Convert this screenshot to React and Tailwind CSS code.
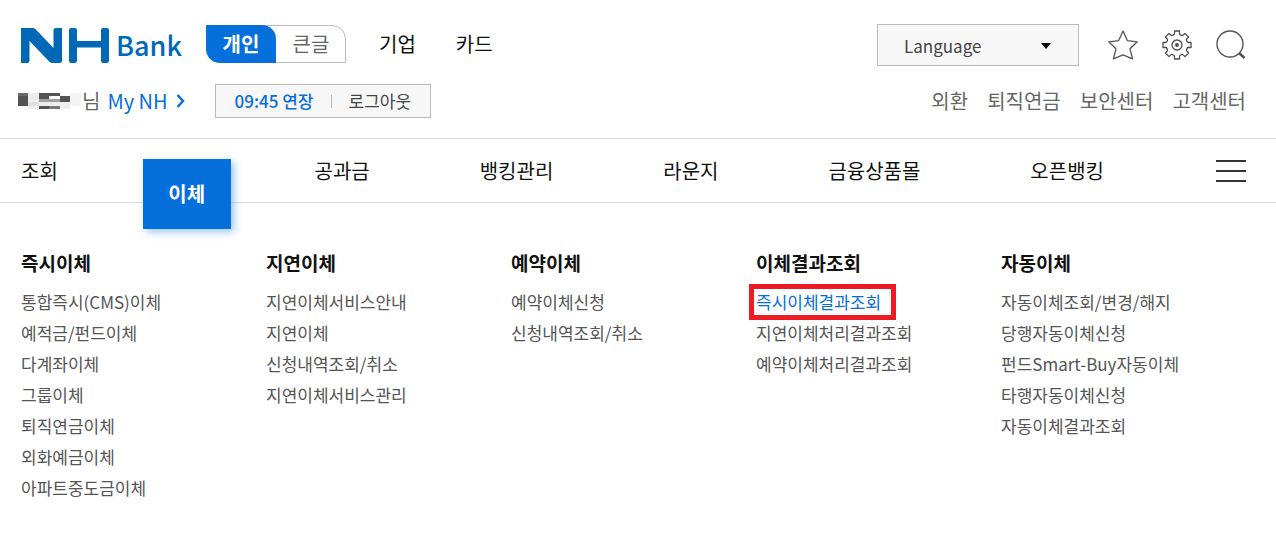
import React from "react";

const navItems = ["조회", "이체", "공과금", "뱅킹관리", "라운지", "금융상품몰", "오픈뱅킹"];
const activeNav = "이체";

const menuGroups = [
  {
    title: "즉시이체",
    links: ["통합즉시(CMS)이체", "예적금/펀드이체", "다계좌이체", "그룹이체", "퇴직연금이체", "외화예금이체", "아파트중도금이체"],
  },
  {
    title: "지연이체",
    links: ["지연이체서비스안내", "지연이체", "신청내역조회/취소", "지연이체서비스관리"],
  },
  { title: "예약이체", links: ["예약이체신청", "신청내역조회/취소"] },
  {
    title: "이체결과조회",
    links: ["즉시이체결과조회", "지연이체처리결과조회", "예약이체처리결과조회"],
    selected: "즉시이체결과조회",
  },
  {
    title: "자동이체",
    links: ["자동이체조회/변경/해지", "당행자동이체신청", "펀드Smart-Buy자동이체", "타행자동이체신청", "자동이체결과조회"],
  },
];

const serviceLinks = ["외환", "퇴직연금", "보안센터", "고객센터"];

function Logo() {
  return (
    <a href="#home" aria-label="NH Bank" className="flex h-[38px] w-[161px] items-end gap-[7px] text-[#0068b7]">
      <svg width="88" height="35" viewBox="0 0 88 35" fill="currentColor" aria-hidden="true" className="shrink-0">
        <path d="M0 0h11c2 0 3 .6 4.300 2L32.500 20V2.500C32.500.8 33.300 0 35 0h6v32.500c0 1.700-.8 2.500-2.500 2.500H32c-2 0-3-.6-4.300-2L8.500 13v19.500C8.500 34.200 7.700 35 6 35H0z" />
        <path d="M50.500 0h3C55.200 0 56 .8 56 2.500V13h24V2.500C80 .8 80.800 0 82.500 0h3C87.200 0 88 .8 88 2.500v30c0 1.700-.8 2.500-2.500 2.500h-3c-1.700 0-2.500-.8-2.500-2.500V19.500H56v13c0 1.700-.8 2.500-2.500 2.500h-3c-1.700 0-2.500-.8-2.500-2.500v-30C48 .8 48.800 0 50.500 0z" />
      </svg>
      <span className="text-[27px] font-medium leading-[36px]">Bank</span>
    </a>
  );
}

function MaskedName() {
  return (
    <svg width="63" height="16" viewBox="0 0 63 16" shapeRendering="crispEdges" role="img" aria-label="이름 비공개">
      <path fill="#6a6a6a" d="M0 0h10v3H0z" />
      <path fill="#535353" d="M0 3h10v10H0zM21 0h10v6H21zM31 0h11v3H31zM42 3h10v6H42zM21 13h10v3H21z" />
      <path fill="#ededed" d="M10 0h11v9H10zM10 13h11v3H10zM42 9h10v7H42zM21 9h21v4H21z" />
      <path fill="#f4f4f4" d="M52 0h11v13H52z" />
      <path fill="#e0e0e0" d="M10 9h11v4H10z" />
      <path fill="#a0a0a0" d="M21 6h21v3H21z" />
      <path fill="#777777" d="M31 13h11v3H31z" />
    </svg>
  );
}

function StarIcon() {
  return (
    <svg width="30" height="30" viewBox="0 0 30 30" fill="none" stroke="#555" strokeWidth="1.300" strokeLinejoin="round" aria-hidden="true">
      <path d="M15 1l4.300 9.600 10 1.200-7.300 7 2.600 10L15 24.800 5.400 28.800l2.600-10-7.300-7 10-1.200z" />
    </svg>
  );
}

function GearIcon() {
  return (
    <svg width="30" height="30" viewBox="0 0 30 30" fill="none" stroke="#4d4d4d" strokeWidth="1.300" strokeLinejoin="round" aria-hidden="true">
      <path d="M12.500 1h5v2.500q0 1 1 1.400l1 .4q1 .4 1.700-.3L23 3.400 26.600 7l-1.700 1.800q-.7.7-.3 1.700l.4 1q.4 1 1.400 1H29v5h-2.600q-1 0-1.400 1l-.4 1q-.4 1 .3 1.700l1.700 1.800L23 26.600l-1.800-1.700q-.7-.7-1.700-.3l-1 .4q-1 .4-1 1.400V29h-5v-2.600q0-1-1-1.400l-1-.4q-1-.4-1.700.3L7 26.600 3.400 23l1.700-1.800q.7-.7.3-1.700l-.4-1q-.4-1-1.400-1H1v-5h2.600q1 0 1.400-1l.4-1q.4-1-.3-1.700L3.400 7 7 3.400l1.800 1.600q.7.7 1.700.3l1-.4q1-.4 1-1.400z" />
      <circle cx="15" cy="15" r="5" />
      <circle cx="15" cy="15" r="1.300" fill="#4d4d4d" />
    </svg>
  );
}

function SearchIcon() {
  return (
    <svg width="30" height="30" viewBox="0 0 30 30" fill="none" stroke="#555" aria-hidden="true">
      <circle cx="14" cy="14" r="13" strokeWidth="1.400" />
      <path d="M23 23l5.500 5" strokeWidth="2.600" />
    </svg>
  );
}

export default function App() {
  return (
    <div className="bg-white pb-8 font-['Noto_Sans_CJK_KR',sans-serif] text-[#111]">
      <header>
        <div className="flex items-center justify-between pl-[21px] pr-[30px] pt-6">
          <div className="flex items-center pb-[2px] text-[20px] leading-[38px]">
            <Logo />
            <div className="ml-6 flex h-[38px] w-[140px]">
              <button type="button" aria-pressed="true" className="relative h-full w-[70px] rounded-bl-[14px] rounded-tr-[14px] bg-[#056fdc] font-bold text-white">
                개인
              </button>
              <button type="button" aria-pressed="false" className="-ml-4 h-full w-[86px] rounded-tr-[14px] border border-[#bbb] pl-4 leading-[36px] text-[#666]">
                큰글
              </button>
            </div>
            <a href="#corporate" className="ml-[33px]">기업</a>
            <a href="#card" className="ml-10">카드</a>
          </div>
          <div className="flex items-center">
            <button type="button" className="mr-[29px] flex h-[42px] w-[202px] items-center justify-between border border-[#bbb] bg-[#f7f7f7] pl-[26px] pr-[27px] pt-px text-[17px] leading-[40px] text-[#444]">
              Language
              <svg width="10" height="6" viewBox="0 0 10 6" aria-hidden="true">
                <path d="M0 0h10L5 6z" fill="#000" />
              </svg>
            </button>
            <div className="flex gap-6">
              <button type="button" aria-label="즐겨찾기"><StarIcon /></button>
              <button type="button" aria-label="설정"><GearIcon /></button>
              <button type="button" aria-label="검색"><SearchIcon /></button>
            </div>
          </div>
        </div>

        <div className="flex items-center justify-between pb-5 pl-[18px] pr-[30px] pt-[18px]">
          <div className="flex items-center">
            <MaskedName />
            <span className="ml-px text-[20px] leading-[34px] text-[#666]">님</span>
            <a href="#my" className="ml-[7px] flex items-center gap-2 text-[20px] leading-[34px] text-[#056fdc]">
              My NH
              <svg width="9" height="14" viewBox="0 0 9 14" fill="none" stroke="currentColor" strokeWidth="2.500" aria-hidden="true">
                <path d="M1.500 1L7 7l-5.500 6" />
              </svg>
            </a>
            <div className="ml-[30px] flex h-[34px] items-center border border-[#bbb] bg-[#f7f7f7] px-[19px] text-[17px]">
              <button type="button" className="font-medium text-[#056fdc]">09:45 연장</button>
              <span className="mx-[17px] h-[13px] w-px bg-[#bbb]" />
              <button type="button" className="text-[#444]">로그아웃</button>
            </div>
          </div>
          <nav aria-label="서비스" className="flex gap-[19px] text-[20px] leading-[34px] text-[#666]">
            {serviceLinks.map((label) => (
              <a key={label} href="#service">{label}</a>
            ))}
          </nav>
        </div>
      </header>

      <nav aria-label="주 메뉴" className="flex h-[65px] items-center gap-28 border-y border-[#ddd] pl-[21px] pr-[30px] text-[20px] leading-[30px]">
        <ul className="flex flex-1 justify-between">
          {navItems.map((label) => (
            <li key={label}>
              {label === activeNav ? (
                <a href="#transfer" aria-current="page" className="relative block font-bold text-white">
                  <span className="invisible">{label}</span>
                  <span className="absolute -left-[25px] top-[3px] flex h-[70px] w-[88px] items-center justify-center bg-[#056fdc] pt-px shadow-[3px_3px_8px_rgba(5,111,220,0.4)]">
                    {label}
                  </span>
                </a>
              ) : (
                <a href="#menu">{label}</a>
              )}
            </li>
          ))}
        </ul>
        <button type="button" aria-label="전체 메뉴" className="flex w-[30px] flex-col gap-2">
          <span className="h-[2px] w-full bg-[#333]" />
          <span className="h-[2px] w-full bg-[#333]" />
          <span className="h-[2px] w-full bg-[#333]" />
        </button>
      </nav>

      <main className="grid grid-cols-5 pl-[21px] pr-[30px] pt-[45px]">
        {menuGroups.map((group) => (
          <section key={group.title}>
            <h2 className="text-[19px] font-bold leading-[30px]">{group.title}</h2>
            <ul className="mt-2 text-[17px] leading-[31px] text-[#555]">
              {group.links.map((label) => (
                <li key={label}>
                  {label === group.selected ? (
                    <a href="#item" aria-current="true" className="relative text-[#056fdc]">
                      {label}
                      <span className="absolute -left-[7px] top-1/2 h-[36px] w-[147px] -translate-y-1/2 border-[5px] border-[#ed1c24]" />
                    </a>
                  ) : (
                    <a href="#item">{label}</a>
                  )}
                </li>
              ))}
            </ul>
          </section>
        ))}
      </main>
    </div>
  );
}
